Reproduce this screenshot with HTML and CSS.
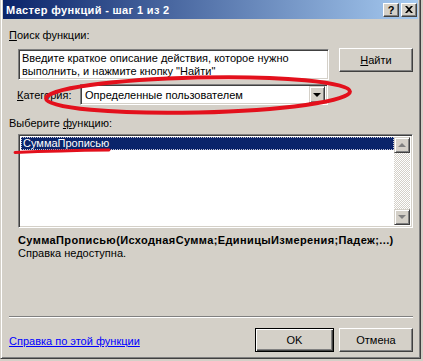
FILE: index.html
```html
<!DOCTYPE html>
<html lang="ru">
<head>
  <meta charset="UTF-8" />
  <title>Мастер функций - шаг 1 из 2</title>
  <link rel="stylesheet" href="styles.css">
</head>
<body>

  <div class="window">
    <div class="titlebar">
      <span class="caption">Мастер функций - шаг 1 из 2</span>
      <div class="caption-btns">
        <span class="cbtn help">?</span>
        <span class="cbtn close">
          <svg width="8" height="7" viewBox="0 0 8 7"><path d="M0 0H2L4 2L6 0H8L5 3.5L8 7H6L4 5L2 7H0L3 3.5Z" fill="#000"/></svg>
        </span>
      </div>
    </div>

    <div class="dlg">
      <div class="lbl"><u>П</u>оиск функции:</div>

      <div class="search-row">
        <div class="field search-box">Введите краткое описание действия, которое нужно выполнить, и нажмите кнопку "Найти"</div>
        <span class="btn find"><u>Н</u>айти</span>
      </div>

      <div class="cat-row">
        <span class="cat-lbl"><u>К</u>атегория:</span>
        <div class="field combo">
          <span class="combo-val">Определенные пользователем</span>
          <span class="combo-btn"><i class="tri-down"></i></span>
        </div>
      </div>

      <div class="lbl pick-lbl">Выберите <u>ф</u>ункцию:</div>

      <div class="field listbox">
        <div class="items">
          <div class="item selected">СуммаПрописью</div>
        </div>
        <div class="vscroll">
          <span class="sbtn"><i class="tri-up grey"></i></span>
          <span class="track"></span>
          <span class="sbtn"><i class="tri-down grey"></i></span>
        </div>
      </div>

      <div class="signature">СуммаПрописью(ИсходнаяСумма;ЕдиницыИзмерения;Падеж;...)</div>
      <div class="help-text">Справка недоступна.</div>

      <div class="separator"></div>

      <div class="footer">
        <a class="help-link" href="#">Справка по этой функции</a>
        <span class="btn ok">OK</span>
        <span class="btn cancel">Отмена</span>
      </div>
    </div>

    <!-- red pen marks drawn over the dialog -->
    <svg class="marks" width="423" height="361" viewBox="0 0 423 361">
      <ellipse cx="198" cy="95" rx="152" ry="17.5" transform="rotate(-1.3 198 95)" fill="none" stroke="#e3101c" stroke-width="4"/>
      <path d="M15 152.5 Q60 150.5 109 150" fill="none" stroke="#e3101c" stroke-width="2.8" stroke-linecap="round"/>
    </svg>
  </div>

</body>
</html>
```

FILE: styles.css
```css
* {
  box-sizing: border-box;
}

body {
  margin: 0;
  padding: 0;
  background-color: #d4d0c8;
  font-family: "Liberation Sans", Arial, sans-serif;
  font-size: 11px;
  color: #000;
}

.window {
  position: relative;
  width: 421px;
  height: 359px;
  background: #d4d0c8;
  border: 1px solid;
  border-top: 0;
  border-color: #d4d0c8 #404040 #404040 #d4d0c8;
  box-shadow: inset 1px 0 #fff, inset -1px -1px #808080;
  padding: 0 2px 2px 2px;
}

/* title bar */
.titlebar {
  display: flex;
  align-items: center;
  height: 19px;
  padding: 0 1px 0 3px;
  background: linear-gradient(to right, #0a246a, #a6caf0);
}

.caption {
  flex: 1;
  color: #fff;
  font-weight: bold;
  font-size: 11px;
  letter-spacing: 0.35px;
  padding-top: 1px;
}

.caption-btns {
  display: flex;
  gap: 2px;
}

.cbtn {
  display: flex;
  align-items: center;
  justify-content: center;
  width: 16px;
  height: 14px;
  background: #d4d0c8;
  border: 1px solid;
  border-color: #fff #404040 #404040 #fff;
  box-shadow: inset -1px -1px #808080;
  font-weight: bold;
  font-size: 11px;
  line-height: 12px;
}

/* dialog body */
.dlg {
  padding: 10px 5px 0 6px;
}

.lbl {
  height: 13px;
  line-height: 13px;
}

.field {
  background: #fff;
  border: 1px solid;
  border-color: #808080 #fff #fff #808080;
  box-shadow: inset 1px 1px #404040, inset -1px -1px #d4d0c8;
}

.btn {
  display: flex;
  align-items: center;
  justify-content: center;
  height: 24px;
  background: #d4d0c8;
  border: 1px solid;
  border-color: #fff #404040 #404040 #fff;
  box-shadow: inset -1px -1px #808080;
}

.search-row {
  display: flex;
  align-items: flex-start;
  margin-top: 7px;
  padding-left: 9px;
}

.search-box {
  width: 311px;
  height: 31px;
  padding: 2px 3px;
  line-height: 13px;
}

.find {
  width: 74px;
  margin-left: 10px;
  margin-top: -1px;
}

.cat-row {
  display: flex;
  align-items: center;
  margin-top: 4px;
  padding-left: 8px;
}

.cat-lbl {
  width: 63px;
}

.combo {
  display: flex;
  align-items: center;
  width: 248px;
  height: 21px;
  padding: 2px;
}

.combo-val {
  flex: 1;
  padding-left: 2px;
}

.combo-btn {
  display: flex;
  align-items: center;
  justify-content: center;
  width: 16px;
  height: 17px;
  background: #d4d0c8;
  border: 1px solid;
  border-color: #d4d0c8 #404040 #404040 #d4d0c8;
  box-shadow: inset 1px 1px #fff, inset -1px -1px #808080;
}

.tri-down {
  width: 0;
  height: 0;
  border-left: 4px solid transparent;
  border-right: 4px solid transparent;
  border-top: 4px solid #000;
}

.tri-up {
  width: 0;
  height: 0;
  border-left: 4px solid transparent;
  border-right: 4px solid transparent;
  border-bottom: 4px solid #000;
}

.tri-down.grey {
  border-top-color: #808080;
}

.tri-up.grey {
  border-bottom-color: #808080;
}

.pick-lbl {
  margin-top: 12px;
}

.listbox {
  display: flex;
  width: 395px;
  height: 94px;
  margin: 4px 0 0 9px;
  padding: 2px;
}

.items {
  flex: 1;
}

.item {
  height: 13px;
  line-height: 11px;
  padding: 0 1px;
  border: 1px dotted transparent;
}

.item.selected {
  background: #0a246a;
  color: #fff;
  border-color: #c8c8d8;
}

.vscroll {
  display: flex;
  flex-direction: column;
  width: 16px;
}

.sbtn {
  display: flex;
  align-items: center;
  justify-content: center;
  height: 16px;
  background: #d4d0c8;
  border: 1px solid;
  border-color: #d4d0c8 #404040 #404040 #d4d0c8;
  box-shadow: inset 1px 1px #fff, inset -1px -1px #808080;
}

.track {
  flex: 1;
  background: repeating-conic-gradient(#fff 0 25%, #d4d0c8 0 50%) 0 0 / 2px 2px;
}

.signature {
  margin: 6px 0 0 9px;
  height: 13px;
  line-height: 13px;
  font-weight: bold;
  letter-spacing: 0.38px;
}

.help-text {
  margin-left: 9px;
  height: 13px;
  line-height: 13px;
}

.separator {
  margin-top: 56px;
  height: 2px;
  border-top: 1px solid #808080;
  border-bottom: 1px solid #fff;
}

.footer {
  display: flex;
  align-items: center;
  margin-top: 10px;
}

.help-link {
  color: #0000ff;
  text-decoration: underline;
  margin-right: auto;
  padding-top: 2px;
}

.ok {
  width: 79px;
  border-color: #000;
  box-shadow: inset 1px 1px #fff, inset -1px -1px #404040, inset -2px -2px #808080;
}

.cancel {
  width: 74px;
  margin-left: 5px;
}

.marks {
  position: absolute;
  top: 0;
  left: -1px;
  pointer-events: none;
}
```
